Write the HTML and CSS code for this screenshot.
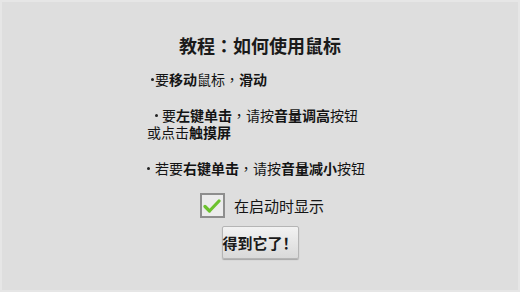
FILE: index.html
```html
<!DOCTYPE html>
<html>
<head>
<meta charset="utf-8">
<link rel="stylesheet" href="styles.css">
</head>
<body>
<div class="screen">
  <h1 class="title">教程<span class="punct">：</span>如何使用鼠标</h1>
  <div class="tips">
    <p class="tip"><span class="bullet b1"></span>要<b>移动</b>鼠标<span class="punct">，</span><b>滑动</b></p>
    <p class="tip"><span class="bullet b2"></span>要<b>左键单击</b><span class="punct">，</span>请按<b>音量调高</b>按钮<br>或点击<b>触摸屏</b></p>
    <p class="tip"><span class="bullet b3"></span>若要<b>右键单击</b><span class="punct">，</span>请按<b>音量减小</b>按钮</p>
  </div>
  <label class="check-row">
    <span class="checkbox">
      <svg width="18" height="16" viewBox="0 0 18 16"><path d="M2 8.5 L6.5 13 L16 3" fill="none" stroke="#6cc22e" stroke-width="3.2" stroke-linecap="round" stroke-linejoin="round"/></svg>
    </span>
    <span class="check-label">在启动时显示</span>
  </label>
  <div class="btn-row"><button class="btn">得到它了！</button></div>
</div>
</body>
</html>
```
FILE: styles.css
```css
html, body { margin: 0; padding: 0; }
body {
  width: 520px; height: 292px; overflow: hidden;
  background: #dedede;
  font-family: "Noto Sans CJK SC", "Noto Sans", sans-serif;
  color: #141414;
  text-spacing-trim: space-all;
}
.screen {
  width: 520px; height: 292px; box-sizing: border-box;
  padding-top: 33px;
  box-shadow: inset 4px 4px 0 -2px #e6e6e6, inset -4px -4px 0 -2px #e6e6e6;
}
.punct { font-family: "Noto Sans CJK TC", sans-serif; }
.title {
  margin: 0; text-align: center;
  font-size: 18px; font-weight: bold; line-height: 24px;
  color: #1a1a1a;
}
.tips { margin-left: 147px; margin-top: 14px; }
.tip {
  margin: 0 0 19px 0;
  font-size: 14px; line-height: 17px; font-weight: normal;
}
.tip:last-child { margin-bottom: 0; }
.tip b { font-weight: bold; }
.bullet {
  display: inline-block; width: 3px; height: 3px; border-radius: 50%;
  background: #222; vertical-align: 4px;
}
.b1 { margin-left: 4px; margin-right: 1px; }
.b2 { margin-left: 8px; margin-right: 4px; }
.b3 { margin-left: 0; margin-right: 5px; }
.check-row {
  display: flex; align-items: center; justify-content: center;
  gap: 9px; margin-top: 16px; margin-left: 4px;
}
.checkbox {
  width: 21px; height: 21px; border: 2px solid #8e8e8e;
  background: #ececec; display: flex; align-items: center; justify-content: center;
}
.check-label { font-size: 15px; line-height: 20px; }
.btn-row { display: flex; justify-content: center; margin-top: 8px; }
.btn {
  width: 77px; height: 33px; box-sizing: border-box;
  border: 1px solid #b5b5b5; border-radius: 2px;
  background: linear-gradient(#f2f2f2, #d9d9d9);
  box-shadow: 0 1px 1px rgba(0,0,0,0.25);
  font-family: "Noto Sans CJK SC", sans-serif;
  font-size: 15px; font-weight: bold; color: #1a1a1a; padding: 0;
  white-space: nowrap;
}
```
